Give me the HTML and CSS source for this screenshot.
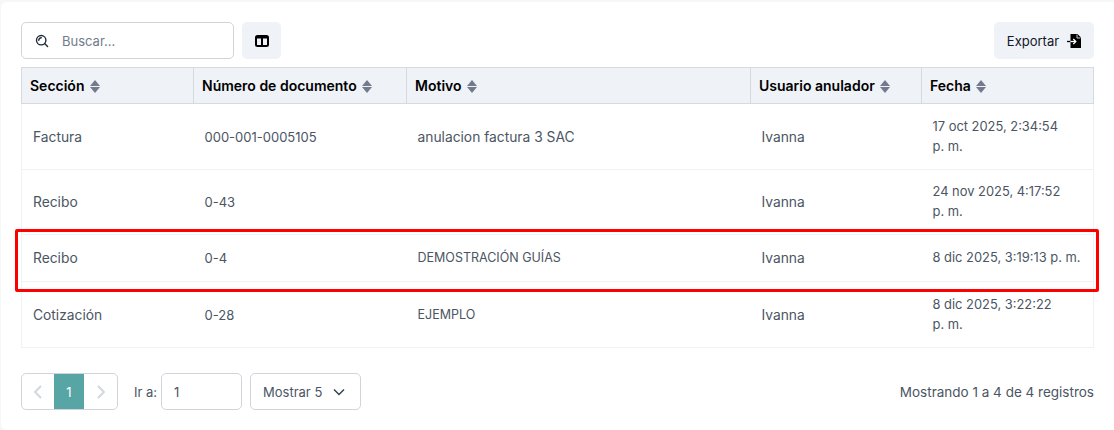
FILE: index.html
```html
<!DOCTYPE html>
<html lang="es">
<head>
    <meta charset="UTF-8">
    <title>Anulaciones</title>
    <link rel="stylesheet" href="styles.css">
</head>
<body>
    <div class="card">
        <div class="toolbar">
            <div class="search">
                <svg class="search-icon" viewBox="0 0 14 14" width="14" height="14"><circle cx="6.2" cy="6.2" r="4.7" fill="none" stroke="#1f2937" stroke-width="1.4"/><path d="M3.8 6.2a2.4 2.4 0 0 1 2.400-2.400M9.600 9.600l3 3" fill="none" stroke="#1f2937" stroke-width="1.400" stroke-linecap="round"/></svg>
                <span class="search-text">Buscar...</span>
            </div>
            <button class="btn-columns">
                <svg viewBox="0 0 14 12" width="14" height="12"><rect x="1" y="1" width="12" height="10" rx="1.500" fill="none" stroke="#000" stroke-width="2"/><path d="M1 2.500h12M7 2v8" stroke="#000" stroke-width="2"/></svg>
            </button>
            <button class="btn-export">
                Exportar
                <svg viewBox="0 0 14 14" width="14" height="14"><path d="M3.500 0h7L14 3.500V14H3.500z" fill="#000"/><path d="M10 0.500V4h3.500" fill="none" stroke="#fff" stroke-width="0.800"/><path d="M0 7.500h3.500" stroke="#000" stroke-width="1.300"/><path d="M3.500 7.500h5" stroke="#fff" stroke-width="1.300"/><path d="M6.300 5l2.500 2.500-2.500 2.500" fill="none" stroke="#fff" stroke-width="1.300"/></svg>
            </button>
        </div>

        <div class="table-wrap">
            <table class="data-table">
                <colgroup>
                    <col class="col-1"><col class="col-2"><col class="col-3"><col class="col-4"><col class="col-5">
                </colgroup>
                <thead>
                    <tr>
                        <th>Sección <span class="sort"></span></th>
                        <th>Número de documento <span class="sort"></span></th>
                        <th>Motivo <span class="sort"></span></th>
                        <th>Usuario anulador <span class="sort"></span></th>
                        <th>Fecha <span class="sort"></span></th>
                    </tr>
                </thead>
                <tbody>
                    <tr class="row-tall">
                        <td class="cell-text">Factura</td>
                        <td>000-001-0005105</td>
                        <td class="cell-text">anulacion factura 3 SAC</td>
                        <td class="cell-text">Ivanna</td>
                        <td class="cell-date">17 oct 2025, 2:34:54 p.&nbsp;m.</td>
                    </tr>
                    <tr class="row-mid">
                        <td class="cell-text">Recibo</td>
                        <td>0-43</td>
                        <td></td>
                        <td class="cell-text">Ivanna</td>
                        <td class="cell-date">24 nov 2025, 4:17:52 p.&nbsp;m.</td>
                    </tr>
                    <tr class="row-short">
                        <td class="cell-text">Recibo</td>
                        <td>0-4</td>
                        <td class="cell-caps">DEMOSTRACIÓN GUÍAS</td>
                        <td class="cell-text">Ivanna</td>
                        <td class="cell-date">8 dic 2025, 3:19:13 p.&nbsp;m.</td>
                    </tr>
                    <tr class="row-tall">
                        <td class="cell-text">Cotización</td>
                        <td>0-28</td>
                        <td class="cell-caps">EJEMPLO</td>
                        <td class="cell-text">Ivanna</td>
                        <td class="cell-date">8 dic 2025, 3:22:22 p.&nbsp;m.</td>
                    </tr>
                </tbody>
            </table>
            <div class="highlight"></div>
        </div>

        <div class="footer">
            <div class="pager">
                <span class="page-arrow prev"><svg viewBox="0 0 10 16" width="10" height="16"><path d="M8 2 2 8l6 6" fill="none" stroke="#d1d5db" stroke-width="1.800"/></svg></span>
                <span class="page-num">1</span>
                <span class="page-arrow next"><svg viewBox="0 0 10 16" width="10" height="16"><path d="m2 2 6 6-6 6" fill="none" stroke="#d1d5db" stroke-width="1.800"/></svg></span>
            </div>
            <span class="goto-label">Ir a:</span>
            <div class="goto-input">1</div>
            <div class="page-size">
                Mostrar 5
                <svg viewBox="0 0 12 8" width="12" height="8"><path d="m1 1.500 5 5 5-5" fill="none" stroke="#374151" stroke-width="1.500"/></svg>
            </div>
            <span class="records">Mostrando 1 a 4 de 4 registros</span>
        </div>
    </div>
</body>
</html>
```

FILE: styles.css
```css
* {
    box-sizing: border-box;
}
body {
    margin: 0;
    background: #f6f7f8;
    font-family: 'Inter', sans-serif;
    font-size: 13px;
    color: #4b5563;
}
.card {
    margin: 2px 0 0 1px;
    height: 428px;
    padding: 20px 20px 0 20px;
    background: #fff;
    border-radius: 6px 0 0 6px;
}
.toolbar {
    display: flex;
    align-items: stretch;
    height: 37px;
    gap: 8px;
}
.search {
    display: flex;
    align-items: center;
    width: 213px;
    padding-left: 13px;
    gap: 13px;
    border: 1px solid #d1d5db;
    border-radius: 5px;
}
.search-text {
    color: #737a8a;
}
.btn-columns,
.btn-export {
    display: flex;
    align-items: center;
    justify-content: center;
    border: none;
    border-radius: 5px;
    background: #eff2f7;
    color: #111827;
    font: inherit;
}
.btn-columns {
    width: 39px;
}
.btn-export {
    width: 100px;
    margin-left: auto;
    gap: 8px;
}
.table-wrap {
    position: relative;
    margin-top: 8px;
}
.data-table {
    width: 1072px;
    border-collapse: collapse;
    table-layout: fixed;
}
.col-1 { width: 172px; }
.col-2 { width: 213px; }
.col-3 { width: 344px; }
.col-4 { width: 171px; }
.col-5 { width: 172px; }
.data-table th {
    height: 36px;
    padding: 0 8px;
    text-align: left;
    font-size: 14px;
    font-weight: 600;
    color: #000;
    background: #eff2f7;
    border: 1px solid #d5d9e0;
}
.data-table td {
    padding: 12px 11px;
    line-height: 20px;
    border-top: 1px solid #eff2f7;
    border-bottom: 1px solid #eff2f7;
}
.data-table td:first-child {
    border-left: 1px solid #eff2f7;
}
.data-table td:last-child {
    border-right: 1px solid #eff2f7;
}
.row-tall td { height: 66px; }
.row-mid td { height: 65px; }
.row-short td { height: 47px; }
.data-table .cell-text { font-size: 13.8px; }
.data-table .cell-caps { font-size: 12.5px; }
.data-table .cell-date { font-size: 12.9px; }
.sort {
    display: inline-block;
    position: relative;
    width: 10px;
    height: 13px;
    margin-left: 2px;
    vertical-align: -2px;
}
.sort::before,
.sort::after {
    content: "";
    position: absolute;
    left: 0;
    border-left: 5px solid transparent;
    border-right: 5px solid transparent;
}
.sort::before {
    top: 0;
    border-bottom: 6px solid #737a8c;
}
.sort::after {
    bottom: 0;
    border-top: 6px solid #737a8c;
}
.highlight {
    position: absolute;
    left: -6px;
    top: 162px;
    width: 1084px;
    height: 63px;
    border: 3px solid #ff0000;
    border-radius: 2px;
}
.footer {
    display: flex;
    align-items: stretch;
    height: 37px;
    margin-top: 25px;
}
.pager {
    display: flex;
    width: 97px;
    border: 1px solid #d1d5db;
    border-radius: 5px;
    overflow: hidden;
}
.page-arrow {
    display: flex;
    align-items: center;
    justify-content: center;
    width: 32px;
}
.page-arrow.next {
    width: 33px;
}
.page-num {
    display: flex;
    align-items: center;
    justify-content: center;
    width: 30px;
    background: #57a5a5;
    color: #fff;
}
.goto-label {
    display: flex;
    align-items: center;
    margin-left: 16px;
    margin-right: 4px;
    width: 23px;
    white-space: nowrap;
}
.goto-input {
    display: flex;
    align-items: center;
    width: 81px;
    padding-left: 12px;
    border: 1px solid #d1d5db;
    border-radius: 5px;
}
.page-size {
    display: flex;
    align-items: center;
    justify-content: space-between;
    width: 111px;
    margin-left: 8px;
    padding: 0 15px 0 12px;
    border: 1px solid #d1d5db;
    border-radius: 5px;
}
.records {
    display: flex;
    align-items: center;
    margin-left: auto;
    font-size: 13.5px;
}
```
